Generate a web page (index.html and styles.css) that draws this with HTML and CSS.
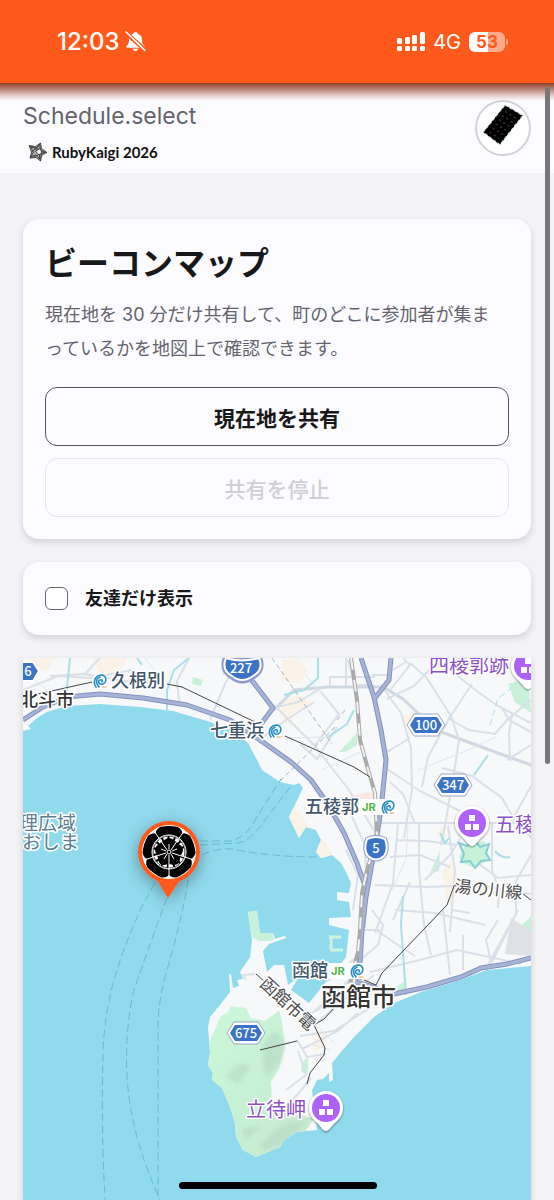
FILE: index.html
```html
<!DOCTYPE html>
<html lang="ja">
<head>
<meta charset="utf-8">
<meta name="viewport" content="width=device-width, initial-scale=1">
<title>ビーコンマップ</title>
<link rel="stylesheet" href="styles.css">
</head>
<body>
<div class="status">
  <div class="status-left">
    <span>12:03</span>
    <svg class="bell" viewBox="0 0 20 20" aria-hidden="true">
      <path fill="#fff" d="M10 1c1.200 0 2 .8 2 1.700 2.800.8 4.200 3 4.200 5.700 0 3.600.8 4.500 2.100 5.700.9.900.5 1.900-.7 1.900H2.400c-1.200 0-1.600-1-.7-1.900C3 12.900 3.800 12 3.800 8.400 3.800 5.700 5.200 3.500 8 2.700 8 1.800 8.800 1 10 1zM7.300 17h5.400c-.4 1.300-1.400 2-2.700 2s-2.300-.7-2.700-2z"/>
      <path stroke="#ff5a1c" stroke-width="4" d="M0 1l20 18"/>
      <path stroke="#fff" stroke-width="1.500" stroke-linecap="round" d="M1 1l18 17.500"/>
    </svg>
  </div>
  <div class="status-right">
    <svg class="signal" viewBox="0 0 28 20" fill="#fff" aria-hidden="true">
      <rect y="6" width="5" height="6" rx="1.500"/><rect x="8" y="5" width="5" height="7" rx="1.500"/><rect x="15" y="3" width="5" height="9" rx="1.500"/><rect x="23" width="5" height="12" rx="1.500"/>
      <rect y="14" width="5" height="5" rx="1.500"/><rect x="8" y="14" width="5" height="5" rx="1.500"/><rect x="15" y="14" width="5" height="5" rx="1.500"/><rect x="23" y="14" width="5" height="5" rx="1.500"/>
    </svg>
    <span class="net">4G</span>
    <span class="battery"><span>5</span><span>3</span></span>
  </div>
</div>

<header class="top">
  <div class="brand">
    <a class="site" href="#">Schedule.select</a>
    <a class="event" href="#">
      <svg class="star" viewBox="0 0 20 20" aria-hidden="true">
        <path fill="#aaa" d="M12.500 1l1 5.500 5.500 4-5 2.500-1.500 6-4.500-3.500-6 .5 1.500-6L1 3.500l6.500 1z"/>
        <g fill="none" stroke="#333" stroke-width=".8">
          <path d="M12.500 1l1 5.500 5.500 4-5 2.500-1.500 6-4.500-3.500-6 .5 1.500-6L1 3.500l6.500 1z"/>
          <path d="M12 3l.5 5 4.500 2.500-5 1.500-.5 5-3.500-4-5 1.500 2.500-4.500L2.500 5 8 6z"/>
          <path d="M12 5.500l-4.500 4 5 5M1 3.500l5 2 8 7.500M12.500 1L9 5.500 3.500 10M19 10.500l-7-1L8 5.500M12.500 19l-1-6.500 2-5M2 16l6-2 6-4"/>
        </g>
        <circle cx="11" cy="10" r="2" fill="#fff"/>
      </svg>
      <span>RubyKaigi 2026</span>
    </a>
  </div>
  <a class="avatar" href="#" aria-label="プロフィール">
    <svg viewBox="0 0 50 50" aria-hidden="true">
      <path fill="#000" stroke="#bfe3dc" stroke-width="1" stroke-dasharray="3 2" d="M27 3l17 10-22 28L6 29z"/>
      <path fill="none" stroke="#554448" stroke-width="1" stroke-dasharray="2 3" d="M27 9l11 7M24 13l11 7M21 17l11 7M18 21l11 7M15 25l11 7M12 29l9 6"/>
    </svg>
  </a>
</header>

<main class="page">
  <section class="card">
    <h1>ビーコンマップ</h1>
    <p>現在地を 30 分だけ共有して、町のどこに参加者が集まっているかを地図上で確認できます。</p>
    <div class="actions">
      <button type="button">現在地を共有</button>
      <button type="button" disabled>共有を停止</button>
    </div>
  </section>

  <section class="card">
    <label class="check"><input type="checkbox"><span>友達だけ表示</span></label>
  </section>

  <section class="map" aria-label="地図">
    <svg viewBox="23 658 508 542" role="img" aria-label="函館周辺の地図">
      <defs>
        <clipPath id="land"><path d="M23 658H531V966L487 970 454 982 421 992 394 1003 374 1017 354 1037 341 1052 332 1063 333 1080 329 1082 329 1073 323 1079 317 1080 312 1090 317 1130 297 1132 284 1140 280 1147 256 1157 243 1150 236 1137 235 1123 230 1107 222 1088 212 1080 213 1073 208 1065 210 1053 208 1027 210 1017 220 1005 230 992 229 974 231 974 233 988 239 986 237 980 243 979 240 972 250 957 252 940 248 912 257 911 260 933 273 933 275 938 262 942 285 936 286 938 269 944 263 951 267 972 274 965 284 965 288 985 299 977 291 990 309 1003 346 957 348 940 349 930 329 925 329 918 351 917 349 902 337 900 337 892 349 893 351 883 346 872 341 863 332 855 321 858 316 852 321 840 316 830 306 827 299 838 289 817 303 788 299 783 294 785 280 782 262 770 257 760 248 743 233 730 207 721 173 711 140 707 100 704 67 706 47 712 37 718 28 726 31 729 23 731Z"/></clipPath>
        <linearGradient id="hill" x2="1" y2="1"><stop stop-color="#cdf8da"/><stop offset=".6" stop-color="#c6f0d3"/><stop offset="1" stop-color="#c8e6cd"/></linearGradient>
        <filter id="soft" x="-30%" y="-30%" width="160%" height="160%"><feGaussianBlur stdDeviation="2"/></filter>
        <filter id="drop" x="-50%" y="-50%" width="200%" height="200%"><feDropShadow dx="0" dy="4" stdDeviation="8" flood-opacity=".35"/></filter>
        <filter id="pinshadow" x="-30%" y="-30%" width="160%" height="160%"><feDropShadow dx="0" dy="1" stdDeviation="1" flood-opacity=".5"/></filter>
        <g id="hex"><path d="M-12-11H12L19 0 12 11H-12L-19 0Z" fill="#fff" stroke="#9aa5c9" stroke-width="1"/><path d="M-11-8H11L16 0 11 8H-11L-16 0Z" fill="#3b74c6"/></g>
        <g id="swirl" fill="none" stroke-linecap="round"><circle r="8" fill="#fff"/><path stroke="#258fc9" stroke-width="1.600" d="M-4 6C-8 0-4-6 2-6 7-5 7 1 3 3-1 4-3 0 0-1 2-2 3 0 2 1M-1 6C-5 1-4-2 0-4"/><path stroke="#e2a45c" stroke-width="1" d="M2 6h4"/></g>
        <g id="pin"><path filter="url(#pinshadow)" fill="#fff" d="M0 22C-3 22-6 16-11 12A17 17 0 1 1 11 12C6 16 3 22 0 22Z"/><circle r="14" cy="-1" fill="#ae62f7"/><path fill="#fff" d="M-3-9h6v6h-6zM-7 0h6v6h-6zM1 0h6v6h-6z"/></g>
      </defs>
      <rect x="23" y="658" width="508" height="542" fill="#90daed"/>
      <g clip-path="url(#land)">
        <rect x="23" y="658" width="508" height="542" fill="#f7f8f9"/>
        <g fill="#faf2e6"><path d="M30 658h25l-8 13-20-4zM92 658h36l-8 12-20 4zM282 660l16-2 10 12-9 14-18-4zM284 700l14-5 17 9-21 9-3 14-11-9zM283 820l12-13 14 20-14 16zM313 850l10-11 10 14-10 8zM443 870l10-10 5 20-5 25-8-8zM316 1030l11 2-1 12-13 9zM402 714l11 2-8 10zM436 833l10-8-1 18zM350 975l20 2-11 8z"/></g>
        <path fill="#fbe8e5" d="M350 796l20-4 10 8-13 7-17-2z"/>
        <g fill="#c7f2d9">
          <path d="M339 752l18-19v12l-12 7zM193 677l10 3-2 6-9-2zM430 873l10-22-1 20zM508 684l20-6 3 35-16-11zM459 857l6-12 20-4 3 20-16 6-11-5zM520 927l11-11v14l-8 2zM290 990l9-14 7 5-5 15zM302 1062l6-5v17l-7-2zM398 985l7-3v10l-8 2zM245 908h14v23l14 2v8h-13l-10-4z"/>
          <path d="M286 812l8 22 7 4-5 8-12-24z"/>
        </g>
        <path fill="url(#hill)" d="M211 1038l10-22 7-4 3-6 15 2 5 10 14 3 11-8 3-3 3 12 3 25-6 22-8 13 1 26 22 4 20 7-10 14-20 11-18 19-36-7-9-23-12-30-17-20z"/>
        <g fill="#b5d8c2" opacity=".6" filter="url(#soft)"><path d="M263 1044l12-13 10 10-4 20-14 17-4-12zM226 1077l12-13 13 2-12 18zM241 1129l20-3-15 14zM258 1146l26-22 20-2-16 20-24 8z"/></g>
        <path fill="#e0e1e6" d="M511 918l20 13v25l-26-2z"/>

        <g fill="none" stroke="#d9e0e8" stroke-width="2">
          <path d="M23 690l35-14 34 2 40-8M50 676l35-2 15-16M83 674l55 9M210 720l15-36 13-22M179 701l-2-20 12-23M262 738l18-14 34-22M273 708l25-6 25-15"/>
          <path stroke="#d0d9e2" stroke-width="3" d="M274 710l20-20 34-3h55l20 12 33 31 40 15 55 20 12 14"/>
          <path d="M274 705l40 40 35 45 28 45M315 745l24-31-18-22M300 744l17 15 20-32M330 687v-10h45M346 658v28M373 685h-18l-7-25M372 675h18M383 688l18 25 10 35 1 42-8 48M393 670l13-8M390 690l20-25-7-7M387 699l27-13 21-22M382 755l28-17"/>
          <path d="M410 663l16 14 25 39 8 24-3 20-10 60-5 25M430 662l15 4 33 26 20 14 33 17M472 684l-22 33-22 40-6 30M531 700l-24 20-12 14-26-4-21-12M512 715l-3 18 1 28M501 706l8 14 22 12M531 745l-24 15M531 786l-22 40M442 768l30 8 30 22 16 28M387 769l33 22 40 20M390 782l13 12 12 30"/>
          <path d="M378 823h145l8 15M398 823l-5 60-18 50M419 824v46l5 55 7 30M397 840l30 1 30 4M390 857l30-2 30 12M375 885l50 2 55-2 51 9M448 826l3 20 4 24-5 62M492 823v47l7 20-1 18M531 855l-15 26v33l-25 50M478 863l20 15 33-3M425 880l25-25 10-16M452 910l18 3"/>
          <path d="M360 930h20M362 890v47M376 930l22 15 17 11M370 972l50-12 37-10 64 14M372 910l11 15-5 20-18 15M443 910l7 65M463 935v35M498 920l-12 20 5 22M518 910l-30 55M395 910l40 3 50 12M410 882l-17 38"/>
          <path d="M314 1025l60-50M308 1017l52-47M300 1036l34-5 37-24M302 1049l36-18 20-18M297 1040l10 17 18-3M286 1090l20-15-8-24M293 1100l18-22M246 980l-3-5 12-1M359 954l-20 20-25 15M362 963l-22 30-24 18M344 970l23 32"/>
          <path d="M349 810l15 33 3 35-2 50M346 850l12 25-5 35"/>
        </g>
        <g fill="none" stroke="#dde7ee" stroke-width="1">
          <path d="M25 672l22 18 20 1M145 658l15 20M225 658l-2 18M285 738l42-1M305 675l25 27M322 770l38-18M418 770l50-20 28-13M408 823l-2 36-14 31M466 823v15M330 1050l-20-6M318 1027l17 17"/>
        </g>
        <g fill="none" stroke="#aadfe7" stroke-width="2"><path d="M70 658l-3 30v12M137 658l5 7M167 712v-22l7-20 15-12M318 658v20l-14 12-20 5M354 710l-7 14-19 13M403 896l-2 29 5 70M474 775l14-20M440 833l5 10 4-5M495 851q7 8 15 6"/></g>
        <path fill="none" stroke="#aadfe7" stroke-dasharray="6 4" d="M490 725l8-27 8-5 10-10"/>
        <g fill="none" stroke="#a8b5c1" stroke-width="1" stroke-dasharray="5 3"><path d="M272 658l60 86M335 727l-58 57M345 710l-8 10"/></g>

        <g fill="none" stroke-linejoin="round" stroke="#8291bd" stroke-width="5">
          <path d="M23 720l20-13 24-10 33-3 43 4 44 7 43 15 30 20 31 22 20 18 16 23 17 30 13 30 7 20M250 678l23 30-12 16M361 658l13 39 7 33 5 30-4 40-3 23-7 40-6 34-4 33-3 50M391 658l-2 22-14 18"/>
          <path d="M355 982l19 5 20 7 33-7 34-10 20-9 26-4 24-6"/>
        </g>
        <g fill="none" stroke-linejoin="round" stroke="#a5b4d8" stroke-width="3">
          <path d="M23 720l20-13 24-10 33-3 43 4 44 7 43 15 30 20 31 22 20 18 16 23 17 30 13 30 7 20M250 678l23 30-12 16M361 658l13 39 7 33 5 30-4 40-3 23-7 40-6 34-4 33-3 50M391 658l-2 22-14 18"/>
          <path d="M355 982l19 5 20 7 33-7 34-10 20-9 26-4 24-6"/>
        </g>
        <g fill="none"><path stroke="#aaa" stroke-width="4" d="M351 658l6 42 3 40 9 33 6 20 2 44-10 33-5 23-2 37-2 22-8 32"/><path stroke="#f2f2f2" stroke-width="2" stroke-dasharray="12 10" d="M351 658l6 42 3 40 9 33 6 20 2 44-10 33-5 23-2 37-2 22-8 32"/></g>
        <path fill="none" stroke="#85cdd3" stroke-width="2" d="M459 843l8 3 7-6 6 7 9-3-3 9 4 7-9 1-6 7-5-7-9 1 3-8z"/>
      </g>
      <path fill="none" stroke="#cbf4dc" stroke-width="3" d="M329 937h12M331 937v13M330 950h13"/>
      <g fill="none" stroke="#69b9d5" stroke-width="1" stroke-dasharray="8 4">
        <path d="M155 883Q142 905 136 920Q123 950 117 970Q103 1015 103 1060Q101 1120 105 1200M167 898Q153 935 133 993Q120 1060 133 1120Q140 1155 160 1200M188 880Q183 915 167 970Q158 1000 158 1030V1200"/>
        <path d="M200 841H230Q246 838 255 820L281 779M200 845L238 843Q252 840 265 820L291 786M202 855Q215 848 233 849Q270 857 318 857"/>
      </g>
      <g fill="none" stroke="#454545" stroke-width="1"><path d="M38 694l54-12M167 684l15 3 73 35M285 736l69 31 16 10M460 884l-6 2-7 19-65 68-6 12-12-5M523 894l8 6M336 1006l-12 13-10 6 11 23-1 7-14 18-3 11M260 1050l37-9M256 974l10 9"/></g>

      <g class="shields">
        <path d="M8 662h25l6 9-6 10H8Z" fill="#3b74c6" stroke="#fff" stroke-width="2"/>
        <path d="M225 657q17 6 35 0 5 13-6 20-12 9-23 0-11-7-6-20z" fill="#3b74c6" stroke="#8c9bcb" stroke-width="4"/><path d="M226 658q16 5 33 0 5 12-6 18-11 8-21 0-11-6-6-18z" fill="#3b74c6" stroke="#fff" stroke-width="2"/>
        <path d="M367 839q9-4 18 0 4 11-1 17-8 7-16 0-5-6-1-17z" fill="#3b74c6" stroke="#8c9bcb" stroke-width="4"/><path d="M367 839q9-4 18 0 4 11-1 17-8 7-16 0-5-6-1-17z" fill="#3b74c6" stroke="#fff" stroke-width="2"/>
        <use href="#hex" x="426" y="725"/><use href="#hex" x="453" y="785"/><use href="#hex" x="246" y="1033"/>
        <text x="28" y="676">6</text><text x="241" y="673">227</text><text x="376" y="853">5</text><text x="426" y="730">100</text><text x="453" y="790">347</text><text x="246" y="1038">675</text>
      </g>
      <g fill="#fff"><rect x="359" y="799" width="38" height="16"/><rect x="328" y="963" width="38" height="16"/></g>
      <g class="jr"><text x="362" y="811">JR</text><text x="331" y="975">JR</text></g>
      <use href="#swirl" x="100" y="681"/><use href="#swirl" x="275" y="731"/><use href="#swirl" x="388" y="807"/><use href="#swirl" x="357" y="971"/>

      <g class="place">
        <text x="111" y="687">久根別</text><text x="210" y="737">七重浜</text><text x="305" y="813">五稜郭</text><text x="292" y="977">函館</text>
      </g>
      <g class="city"><text x="20" y="706">北斗市</text><text class="big" x="321" y="1006">函館市</text></g>
      <g class="area"><text x="19" y="830">理広域</text><text x="22" y="849">おしま</text></g>
      <g class="rail"><text transform="translate(454 892) rotate(6)">湯の川線</text><text transform="translate(259 985) rotate(43)">函館市電</text></g>
      <g class="sight"><text x="429" y="673">四稜郭跡</text><text x="495" y="832">五稜郭</text><text x="246" y="1117">立待岬</text></g>
      <use href="#pin" x="472" y="824"/><use href="#pin" x="326" y="1109"/><use href="#pin" x="528" y="667"/>

      <g filter="url(#drop)"><path fill="#ff5a1c" d="M157 880L168 898 180 880Z"/><circle cx="169" cy="852" r="31" fill="#ff5a1c"/></g>
      <circle cx="169" cy="852" r="27" fill="#fff"/>
      <g transform="translate(169 852)">
        <g fill="#000">
          <path id="petal" d="M-9-25Q0-27 9-25Q15-21 13-16L10-13A16 16 0 0 0-10-13L-13-16Q-15-21-9-25Z"/>
          <use href="#petal" transform="rotate(72)"/><use href="#petal" transform="rotate(144)"/><use href="#petal" transform="rotate(216)"/><use href="#petal" transform="rotate(288)"/>
        </g>
        <circle r="16" fill="#000"/>
        <circle r="17" fill="none" stroke="#fff" stroke-width="1"/>
        <circle r="14" fill="none" stroke="#fff" stroke-width="3" stroke-dasharray="4 2"/>
        <g fill="#000"><circle cy="-8" r="6"/><circle cx="8" cy="-2" r="6"/><circle cx="5" cy="7" r="6"/><circle cx="-5" cy="7" r="6"/><circle cx="-8" cy="-2" r="6"/></g>
        <path stroke="#fff" stroke-width="1" d="M0 3V26M2-2L15-21M-2-2L-15-21M-3 1L-25 8M3 1L25 8"/>
        <path stroke="#fff" stroke-width="1" d="M0-3V-8M-3-1L-8-3M3-1L8-3M-2 2L-5 7M2 2L5 7"/>
        <circle r="2" fill="#000" stroke="#fff"/>
      </g>
    </svg>
  </section>
</main>
<div class="scrollbar"></div>
<div class="home"></div>
</body>
</html>
```

FILE: styles.css
```css
* { box-sizing: border-box; }
body {
  margin: 0;
  position: relative;
  background: #f3f3f5;
  color: #18181b;
  font-family: Inter, "Noto Sans CJK JP", sans-serif;
}
a { color: inherit; text-decoration: none; }

.status {
  position: relative;
  display: flex;
  justify-content: space-between;
  align-items: center;
  height: 83px;
  padding: 0 49px 0 57px;
  background: #ff5a1c;
  color: #fff;
}
.status::after {
  content: "";
  position: absolute;
  left: 0;
  right: 0;
  top: 100%;
  height: 18px;
  background: linear-gradient(#8f402b, #bb8375 35%, #e5cecb 70%, rgba(252, 252, 254, 0));
}
.status-left, .status-right { display: flex; align-items: center; }
.status-left { gap: 5px; font-size: 24px; font-weight: 500; }
.bell { width: 21px; height: 21px; }
.status-right { gap: 8px; font-size: 20px; }
.signal { width: 28px; height: 20px; }
.battery {
  position: relative;
  display: flex;
  justify-content: center;
  width: 36px;
  height: 20px;
  border-radius: 6px;
  background: linear-gradient(90deg, #fff 53%, #ffab8b 53%);
  color: #ff5a1c;
  font-size: 17px;
  font-weight: 700;
  line-height: 20px;
}
.battery::after {
  content: "";
  position: absolute;
  left: 37px;
  top: 7px;
  width: 2px;
  height: 6px;
  border-radius: 0 2px 2px 0;
  background: #ffab8b;
}

.top {
  display: flex;
  justify-content: space-between;
  align-items: center;
  height: 90px;
  padding: 0 23px;
  background: #fcfcfe;
}
.brand { display: flex; flex-direction: column; gap: 11px; padding-top: 6px; }
.site { color: #63636d; font-size: 23px; line-height: 30px; }
.event {
  display: flex;
  align-items: center;
  gap: 4px;
  padding-left: 5px;
  color: #111;
  font-family: Lato, sans-serif;
  font-size: 15px;
  font-weight: 700;
  line-height: 20px;
}
.star { width: 20px; height: 20px; }
.avatar {
  width: 56px;
  height: 56px;
  border: 2px solid #d3d2d9;
  border-radius: 50%;
  background: #fff;
  overflow: hidden;
}
.avatar svg { display: block; width: 100%; }

.page { display: grid; gap: 23px; padding: 46px 23px 0; }
.card {
  padding: 22px;
  border-radius: 16px;
  background: #fcfcfe;
  box-shadow: 0 3px 7px rgba(0, 0, 0, .14);
}
h1 { margin: 0; font-size: 32px; font-weight: 700; line-height: 45px; }
p { margin: 12px 0 21px; padding-right: 8px; color: #63636d; font-size: 18px; line-height: 34px; }
.actions { display: grid; gap: 12px; }
button {
  height: 59px;
  border: 1px solid #55555c;
  border-radius: 12px;
  background: transparent;
  color: #18181b;
  font: 700 21px Inter, "Noto Sans CJK JP", sans-serif;
}
button:disabled { border-color: #e5e5ea; color: #cfcfd6; font-weight: 500; }
.check { display: flex; align-items: center; gap: 17px; font-size: 18px; font-weight: 700; line-height: 29px; }
.check input {
  appearance: none;
  width: 23px;
  height: 23px;
  margin: 0;
  border: 1px solid #66666d;
  border-radius: 6px;
  background: #fff;
}

.map { box-shadow: 0 3px 7px rgba(0, 0, 0, .14); }
.map svg { display: block; width: 100%; }
.map text { font-family: "Noto Sans CJK JP", sans-serif; paint-order: stroke; stroke: #fff; stroke-width: 3px; stroke-linejoin: round; }
.map .shields text { fill: #fff; stroke: none; font-size: 13px; font-weight: 500; text-anchor: middle; }
.map .jr text { fill: #50b848; stroke: none; font-family: Inter, sans-serif; font-size: 11px; font-weight: 700; }
.place text { fill: #40566b; font-size: 18px; font-weight: 500; }
.city text { fill: #333; font-size: 18px; font-weight: 500; }
.city .big { font-size: 25px; }
.area text { fill: #5a7d91; font-size: 19px; }
.rail text { fill: #4d4d4d; font-size: 17px; }
.sight text { fill: #8c50c8; font-size: 20px; }

.scrollbar {
  position: absolute;
  top: 87px;
  right: 4px;
  width: 5px;
  height: 677px;
  border-radius: 3px;
  background: #77777b;
}
.home {
  position: fixed;
  left: 50%;
  bottom: 11px;
  width: 198px;
  height: 7px;
  margin-left: -98px;
  border-radius: 4px;
  background: #000;
}
```
